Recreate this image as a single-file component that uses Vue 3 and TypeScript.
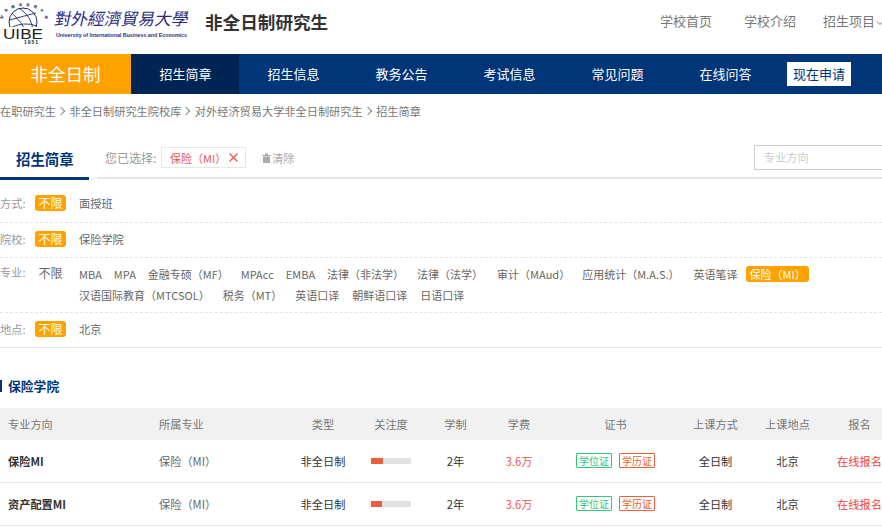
<script setup lang="ts">
const navItems = ['招生简章', '招生信息', '教务公告', '考试信息', '常见问题', '在线问答']
const majors1 = ['MBA', 'MPA', '金融专硕（MF）', 'MPAcc', 'EMBA', '法律（非法学）', '法律（法学）', '审计（MAud）', '应用统计（M.A.S.）', '英语笔译']
const majors2 = ['汉语国际教育（MTCSOL）', '税务（MT）', '英语口译', '朝鲜语口译', '日语口译']
const cols = ['专业方向', '所属专业', '类型', '关注度', '学制', '学费', '证书', '上课方式', '上课地点', '报名']
const rows = [
  { name: '保险MI', heat: 30 },
  { name: '资产配置MI', heat: 27.5 }
]
</script>

<template>
  <div class="page">
    <header class="top">
      <div class="logo">
        <svg class="emblem" width="46" height="46" viewBox="0 0 46 46">
          <defs>
            <path id="arc" d="M1 19 A21 13 0 0 1 43 19" />
          </defs>
          <text class="arc"><textPath href="#arc" textLength="54">對外經濟貿易大學</textPath></text>
          <circle cx="21" cy="22" r="14" fill="none" stroke="#1c2a6e" stroke-width="1" />
          <path d="M10 13 Q20 22 25 33 M17 8 Q31 17 31 33 M7.500 20 Q22 16 34 13 M8 28 Q22 21 35 26" fill="none" stroke="#1c2a6e" stroke-width="0.9" />
          <rect x="1" y="27" width="42" height="13" fill="#fff" />
          <text x="1" y="39" class="uibe" textLength="40" lengthAdjust="spacingAndGlyphs">UIBE</text>
          <text x="22" y="44" class="year" textLength="14">1951</text>
        </svg>
        <div class="logo-name">
          <span class="cn">對外經濟貿易大學</span>
          <span class="en">University of International Business and Economics</span>
        </div>
      </div>
      <h1 class="title">非全日制研究生</h1>
      <nav class="toplinks">
        <a>学校首页</a>
        <a>学校介绍</a>
        <a class="more">招生项目<svg width="8" height="6" viewBox="0 0 8 6"><path d="M1 1.500 L4 4.500 L7 1.500" fill="none" stroke="#777" stroke-width="1" /></svg></a>
      </nav>
    </header>

    <div class="navbar">
      <div class="brand">非全日制</div>
      <a v-for="(n, i) in navItems" :key="n" class="navlink" :class="{ active: i === 0 }">{{ n }}</a>
      <a class="apply">现在申请</a>
    </div>

    <div class="crumbs">
      <span>在职研究生</span><i></i><span>非全日制研究生院校库</span><i></i><span>对外经济贸易大学非全日制研究生</span><i></i><span>招生简章</span>
    </div>

    <div class="tabs">
      <div class="tab">招生简章</div>
      <div class="tabrest">
        <span class="chosen-label">您已选择:</span>
        <span class="chosen">保险（MI）<svg width="9" height="9" viewBox="0 0 9 9"><path d="M0.500 0.500 L8.500 8.500 M8.500 0.500 L0.500 8.500" stroke="#ef5350" stroke-width="1.200" fill="none" /></svg></span>
        <span class="clear"><svg width="9" height="10" viewBox="0 0 9 10"><path d="M0 2 H9 V3 H0 Z M3 0.500 H6 V2 H3 Z M1 3.500 H8 V10 H1 Z" fill="#aaa" /></svg>清除</span>
        <div class="search">专业方向</div>
      </div>
    </div>

    <div class="filter first">
      <span class="flabel">方式:</span><span class="on">不限</span><div class="opts"><span>面授班</span></div>
    </div>
    <div class="filter">
      <span class="flabel">院校:</span><span class="on">不限</span><div class="opts"><span>保险学院</span></div>
    </div>
    <div class="filter multi">
      <span class="flabel">专业:</span><span class="off">不限</span>
      <div class="opts wrap">
        <div class="line one"><span v-for="m in majors1" :key="m">{{ m }}</span><span class="picked">保险（MI）</span></div>
        <div class="line two"><span v-for="m in majors2" :key="m">{{ m }}</span></div>
      </div>
    </div>
    <div class="filter last">
      <span class="flabel">地点:</span><span class="on">不限</span><div class="opts"><span>北京</span></div>
    </div>

    <h2 class="section">保险学院</h2>

    <div class="table">
      <div class="tr head">
        <div v-for="c in cols" :key="c" class="td">{{ c }}</div>
      </div>
      <div v-for="r in rows" :key="r.name" class="tr">
        <div class="td strong">{{ r.name }}</div>
        <div class="td">保险（MI）</div>
        <div class="td dark">非全日制</div>
        <div class="td"><div class="bar"><div class="fill" :style="{ width: r.heat + '%' }"></div></div></div>
        <div class="td dark">2年</div>
        <div class="td fee">3.6万</div>
        <div class="td certs"><span class="cert green">学位证</span><span class="cert red">学历证</span></div>
        <div class="td dark">全日制</div>
        <div class="td dark">北京</div>
        <div class="td signup">在线报名</div>
      </div>
    </div>
  </div>
</template>

<style>
html, body { margin: 0; overflow: hidden; background: #fff; }
</style>

<style scoped>
.page {
  width: 882px;
  height: 528px;
  overflow: hidden;
  font-family: "Noto Sans CJK SC", "Liberation Sans", sans-serif;
  font-size: 12px;
  color: #666;
}
.top { height: 54px; display: flex; align-items: flex-start; }
.logo { width: 189px; display: flex; flex: none; }
.emblem { flex: none; margin-left: 2px; overflow: visible; }
.arc { font: bold 3.500px "Noto Sans CJK TC", sans-serif; fill: #1c2a6e; }
.uibe { font: 15px "Liberation Sans", sans-serif; fill: #222; }
.year { font: bold 5px "Liberation Sans", sans-serif; fill: #222; }
.logo-name { display: flex; flex-direction: column; margin-left: 6px; padding-top: 4px; color: #2a2f7c; white-space: nowrap; }
.cn { font: 16.750px/28px "Noto Sans CJK TC", sans-serif; transform: skewX(-12deg); transform-origin: 50% 100%; margin-left: -2px; }
.en { font: bold 5.300px/7px "Liberation Sans", sans-serif; margin-left: 2px; }
.title { margin: 9px 0 0 16px; font-size: 17.600px; font-weight: 700; color: #333; line-height: 26px; }
.toplinks { margin: 11px 0 0 auto; display: flex; gap: 32px; font-size: 13px; line-height: 20px; color: #777; white-space: nowrap; width: 222px; flex: none; }
.more { margin-left: -5px; }
.more svg { margin-left: 1px; }
.navbar { height: 40px; background: #003578; display: flex; align-items: center; color: #fff; font-size: 13px; }
.brand { width: 131px; height: 40px; background: #ffa200; font-size: 17.600px; line-height: 39px; text-align: center; flex: none; }
.navlink { width: 108px; height: 40px; line-height: 39px; text-align: center; flex: none; padding-left: 1px; box-sizing: border-box; }
.navlink.active { background: #002555; }
.apply { margin-left: 8px; width: 64px; height: 24px; line-height: 23px; text-align: center; background: #fff; color: #003578; flex: none; }
.crumbs { display: flex; align-items: center; height: 20px; margin-top: 7px; font-size: 11.200px; color: #777; white-space: nowrap; }
.crumbs i { width: 5px; height: 5px; border-top: 1px solid #888; border-right: 1px solid #888; transform: rotate(45deg); margin: 0 5.500px 0 2px; }
.tabs { display: flex; margin-top: 21px; height: 38px; }
.tab { width: 89px; flex: none; border-bottom: 3px solid #003578; box-sizing: border-box; height: 38px; padding-left: 16px; font-size: 14.400px; font-weight: 700; color: #003578; line-height: 34px; white-space: nowrap; }
.tabrest { flex: 1; margin-left: 8px; border-bottom: 2px solid #e5e5e5; height: 37px; box-sizing: border-box; display: flex; align-items: center; padding-bottom: 4px; }
.chosen-label { color: #999; width: 56px; margin-left: 8px; flex: none; white-space: nowrap; }
.chosen { display: flex; align-items: center; gap: 3px; border: 1px solid #e8e8e8; height: 21px; box-sizing: border-box; padding: 0 7px 0 8px; color: #ef5350; font-size: 11px; white-space: nowrap; }
.clear { display: flex; align-items: center; gap: 1px; margin-left: 16px; color: #aaa; font-size: 11.200px; }
.search { margin-left: auto; width: 128px; height: 25px; box-sizing: border-box; border: 1px solid #ccc; border-right: 0; color: #ccc; font-size: 11.200px; line-height: 23px; padding-left: 9px; }
.filter { display: flex; align-items: center; height: 35px; padding-bottom: 2px; box-sizing: border-box; border-bottom: 1px dashed #e5e5e5; white-space: nowrap; }
.filter.first { margin-top: 4px; height: 39px; padding-bottom: 0; }
.filter.last { border-bottom: 1px solid #e5e5e5; }
.filter.multi { height: 55px; align-items: flex-start; padding-top: 5px; }
.flabel { width: 35px; flex: none; color: #999; font-size: 11.200px; }
.multi .flabel, .multi .off { line-height: 19px; }
.on, .off { width: 31px; height: 16px; line-height: 15px; text-align: center; border-radius: 3px; flex: none; }
.on { background: #ffa200; color: #fff; }
.off { color: #666; }
.opts { margin-left: 13px; color: #666; font-size: 11.200px; }
.opts.wrap { font-size: 11px; }
.line { display: flex; gap: 12px; height: 21px; align-items: center; }
.line.two { gap: 13px; }
.one span:nth-child(7) { margin-left: 1px; }
.one span:nth-child(8), .one span:nth-child(10) { margin-left: 2px; }
.one .picked { margin-left: -4px; background: #ffa200; color: #fff; border-radius: 3px; padding: 0 4px; height: 16px; line-height: 16px; width: 63px; box-sizing: border-box; }
.section { margin: 19px 0 0; height: 38px; font-size: 12.800px; font-weight: 700; color: #003578; position: relative; padding-left: 8px; line-height: 38px; box-sizing: border-box; }
.section::before { content: ""; position: absolute; left: 0; top: 13px; width: 2px; height: 12px; background: #003578; }
.table { margin-top: 3px; width: 884px; font-size: 11.200px; }
.tr { display: grid; grid-template-columns: 151px 126px 92px 44px 85px 42px 151px 49px 95px 49px; height: 43px; padding-bottom: 1px; box-sizing: border-box; align-items: center; border-bottom: 1px solid #e8e8e8; text-align: center; white-space: nowrap; }
.tr.head { background: #f1f1f1; height: 32px; border: 0; color: #777; padding: 0; }
.td:first-child, .td:nth-child(2) { text-align: left; padding-left: 8px; }
.strong { font-weight: 700; color: #333; }
.dark { color: #333; }
.fee { color: #ef5350; }
.bar { width: 40px; height: 6px; background: #e2e2e2; margin: 0 auto; }
.fill { height: 6px; background: #e8603c; }
.certs { display: flex; justify-content: center; gap: 7px; }
.cert { width: 36px; height: 15px; box-sizing: border-box; border: 1px solid; border-radius: 1px; line-height: 13px; font-size: 10px; }
.green { color: #38c47a; border-color: #38c47a; }
.red { color: #e8603c; border-color: #e8603c; }
.signup { color: #f0433a; }
</style>
